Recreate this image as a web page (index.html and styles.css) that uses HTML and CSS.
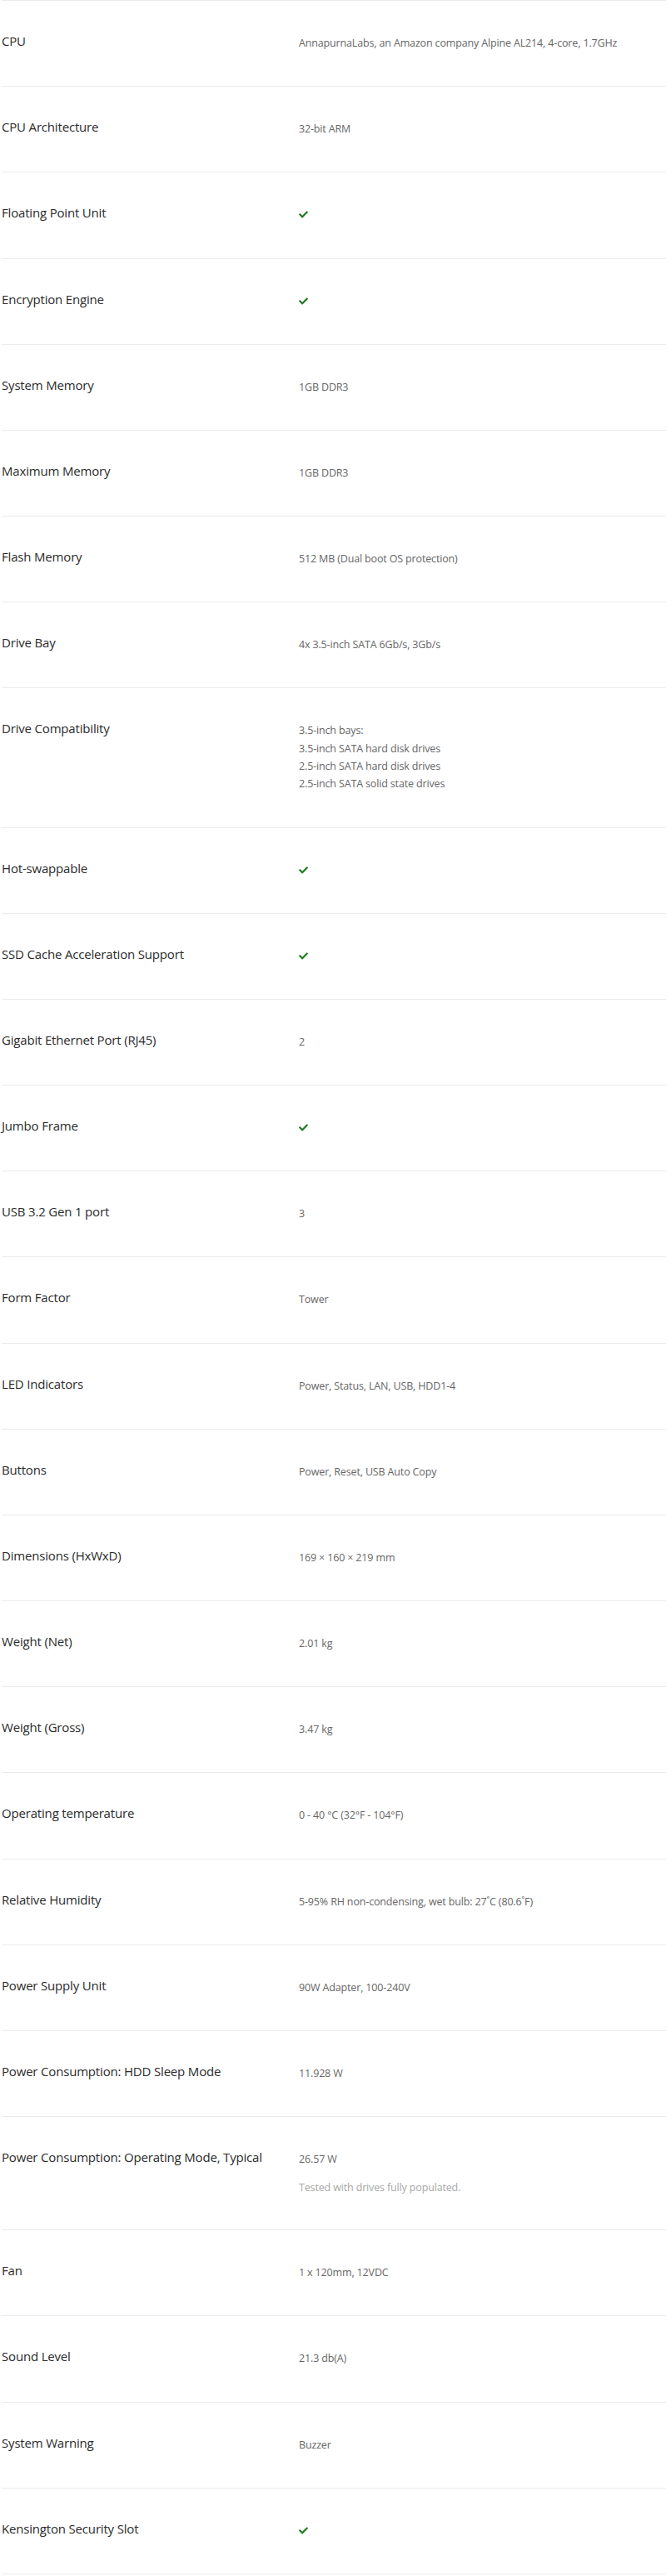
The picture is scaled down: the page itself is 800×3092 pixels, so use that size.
FILE: index.html
```html
<!DOCTYPE html>
<html lang="en">
<head>
<meta charset="utf-8">
<title>Specifications</title>
<link rel="stylesheet" href="styles.css">
</head>
<body>
<div class="specs">
  <div class="row"><div class="label">CPU</div><div class="value"><p>AnnapurnaLabs, an Amazon company Alpine AL214, 4-core, 1.7GHz</p></div></div>
  <div class="row"><div class="label">CPU Architecture</div><div class="value"><p>32-bit ARM</p></div></div>
  <div class="row"><div class="label">Floating Point Unit</div><div class="value"><p><svg class="check" viewBox="0 0 512 512"><path d="M173.9 439.4l-166.4-166.4c-10-10-10-26.2 0-36.2l36.2-36.2c10-10 26.2-10 36.2 0L192 312.7 432.1 72.6c10-10 26.2-10 36.2 0l36.2 36.2c10 10 10 26.2 0 36.2l-294.4 294.4c-10 10-26.2 10-36.2 0z"/></svg></p></div></div>
  <div class="row"><div class="label">Encryption Engine</div><div class="value"><p><svg class="check" viewBox="0 0 512 512"><path d="M173.9 439.4l-166.4-166.4c-10-10-10-26.2 0-36.2l36.2-36.2c10-10 26.2-10 36.2 0L192 312.7 432.1 72.6c10-10 26.2-10 36.2 0l36.2 36.2c10 10 10 26.2 0 36.2l-294.4 294.4c-10 10-26.2 10-36.2 0z"/></svg></p></div></div>
  <div class="row"><div class="label">System Memory</div><div class="value"><p>1GB DDR3</p></div></div>
  <div class="row"><div class="label">Maximum Memory</div><div class="value"><p>1GB DDR3</p></div></div>
  <div class="row"><div class="label">Flash Memory</div><div class="value"><p>512 MB (Dual boot OS protection)</p></div></div>
  <div class="row"><div class="label">Drive Bay</div><div class="value"><p>4x 3.5-inch SATA 6Gb/s, 3Gb/s</p></div></div>
  <div class="row"><div class="label">Drive Compatibility</div><div class="value"><p>3.5-inch bays:<br>3.5-inch SATA hard disk drives<br>2.5-inch SATA hard disk drives<br>2.5-inch SATA solid state drives</p></div></div>
  <div class="row"><div class="label">Hot-swappable</div><div class="value"><p><svg class="check" viewBox="0 0 512 512"><path d="M173.9 439.4l-166.4-166.4c-10-10-10-26.2 0-36.2l36.2-36.2c10-10 26.2-10 36.2 0L192 312.7 432.1 72.6c10-10 26.2-10 36.2 0l36.2 36.2c10 10 10 26.2 0 36.2l-294.4 294.4c-10 10-26.2 10-36.2 0z"/></svg></p></div></div>
  <div class="row"><div class="label">SSD Cache Acceleration Support</div><div class="value"><p><svg class="check" viewBox="0 0 512 512"><path d="M173.9 439.4l-166.4-166.4c-10-10-10-26.2 0-36.2l36.2-36.2c10-10 26.2-10 36.2 0L192 312.7 432.1 72.6c10-10 26.2-10 36.2 0l36.2 36.2c10 10 10 26.2 0 36.2l-294.4 294.4c-10 10-26.2 10-36.2 0z"/></svg></p></div></div>
  <div class="row"><div class="label">Gigabit Ethernet Port (RJ45)</div><div class="value"><p>2</p></div></div>
  <div class="row"><div class="label">Jumbo Frame</div><div class="value"><p><svg class="check" viewBox="0 0 512 512"><path d="M173.9 439.4l-166.4-166.4c-10-10-10-26.2 0-36.2l36.2-36.2c10-10 26.2-10 36.2 0L192 312.7 432.1 72.6c10-10 26.2-10 36.2 0l36.2 36.2c10 10 10 26.2 0 36.2l-294.4 294.4c-10 10-26.2 10-36.2 0z"/></svg></p></div></div>
  <div class="row"><div class="label">USB 3.2 Gen 1 port</div><div class="value"><p>3</p></div></div>
  <div class="row"><div class="label">Form Factor</div><div class="value"><p>Tower</p></div></div>
  <div class="row"><div class="label">LED Indicators</div><div class="value"><p>Power, Status, LAN, USB, HDD1-4</p></div></div>
  <div class="row"><div class="label">Buttons</div><div class="value"><p>Power, Reset, USB Auto Copy</p></div></div>
  <div class="row"><div class="label">Dimensions (HxWxD)</div><div class="value"><p>169 × 160 × 219 mm</p></div></div>
  <div class="row"><div class="label">Weight (Net)</div><div class="value"><p>2.01 kg</p></div></div>
  <div class="row"><div class="label">Weight (Gross)</div><div class="value"><p>3.47 kg</p></div></div>
  <div class="row"><div class="label">Operating temperature</div><div class="value"><p>0 - 40 °C (32°F - 104°F)</p></div></div>
  <div class="row"><div class="label">Relative Humidity</div><div class="value"><p>5-95% RH non-condensing, wet bulb: 27˚C (80.6˚F)</p></div></div>
  <div class="row"><div class="label">Power Supply Unit</div><div class="value"><p>90W Adapter, 100-240V</p></div></div>
  <div class="row"><div class="label">Power Consumption: HDD Sleep Mode</div><div class="value"><p>11.928 W</p></div></div>
  <div class="row"><div class="label">Power Consumption: Operating Mode, Typical</div><div class="value"><p>26.57 W</p><p class="note">Tested with drives fully populated.</p></div></div>
  <div class="row"><div class="label">Fan</div><div class="value"><p>1 x 120mm, 12VDC</p></div></div>
  <div class="row"><div class="label">Sound Level</div><div class="value"><p>21.3 db(A)</p></div></div>
  <div class="row"><div class="label">System Warning</div><div class="value"><p>Buzzer</p></div></div>
  <div class="row"><div class="label">Kensington Security Slot</div><div class="value"><p><svg class="check" viewBox="0 0 512 512"><path d="M173.9 439.4l-166.4-166.4c-10-10-10-26.2 0-36.2l36.2-36.2c10-10 26.2-10 36.2 0L192 312.7 432.1 72.6c10-10 26.2-10 36.2 0l36.2 36.2c10 10 10 26.2 0 36.2l-294.4 294.4c-10 10-26.2 10-36.2 0z"/></svg></p></div></div>
</div>
</body>
</html>
```

FILE: styles.css
```css
html, body {
  margin: 0;
  padding: 0;
  background: #ffffff;
}

body {
  font-family: "Open Sans", "Noto Sans", sans-serif;
}

.specs {
  margin-left: 2px;
  border-top: 1px solid #ebebeb;
}

.row {
  display: grid;
  grid-template-columns: 357px 1fr;
  padding: 40px 0 40.85px;
  border-bottom: 1px solid #ebebeb;
}

.label {
  font-size: 15px;
  line-height: 24px;
  letter-spacing: -0.18px;
  color: #2b2b2b;
  margin-top: -4px;
}

.value {
  font-size: 12.5px;
  line-height: 21.33px;
  letter-spacing: -0.15px;
  color: #666666;
}

.value p {
  margin: 0;
}

.value .note {
  margin-top: 15px;
  line-height: 18px;
  color: #a8a8a8;
}

.check {
  display: inline-block;
  width: 11px;
  height: 11px;
  fill: #1f7a1f;
  vertical-align: -1px;
}
```
